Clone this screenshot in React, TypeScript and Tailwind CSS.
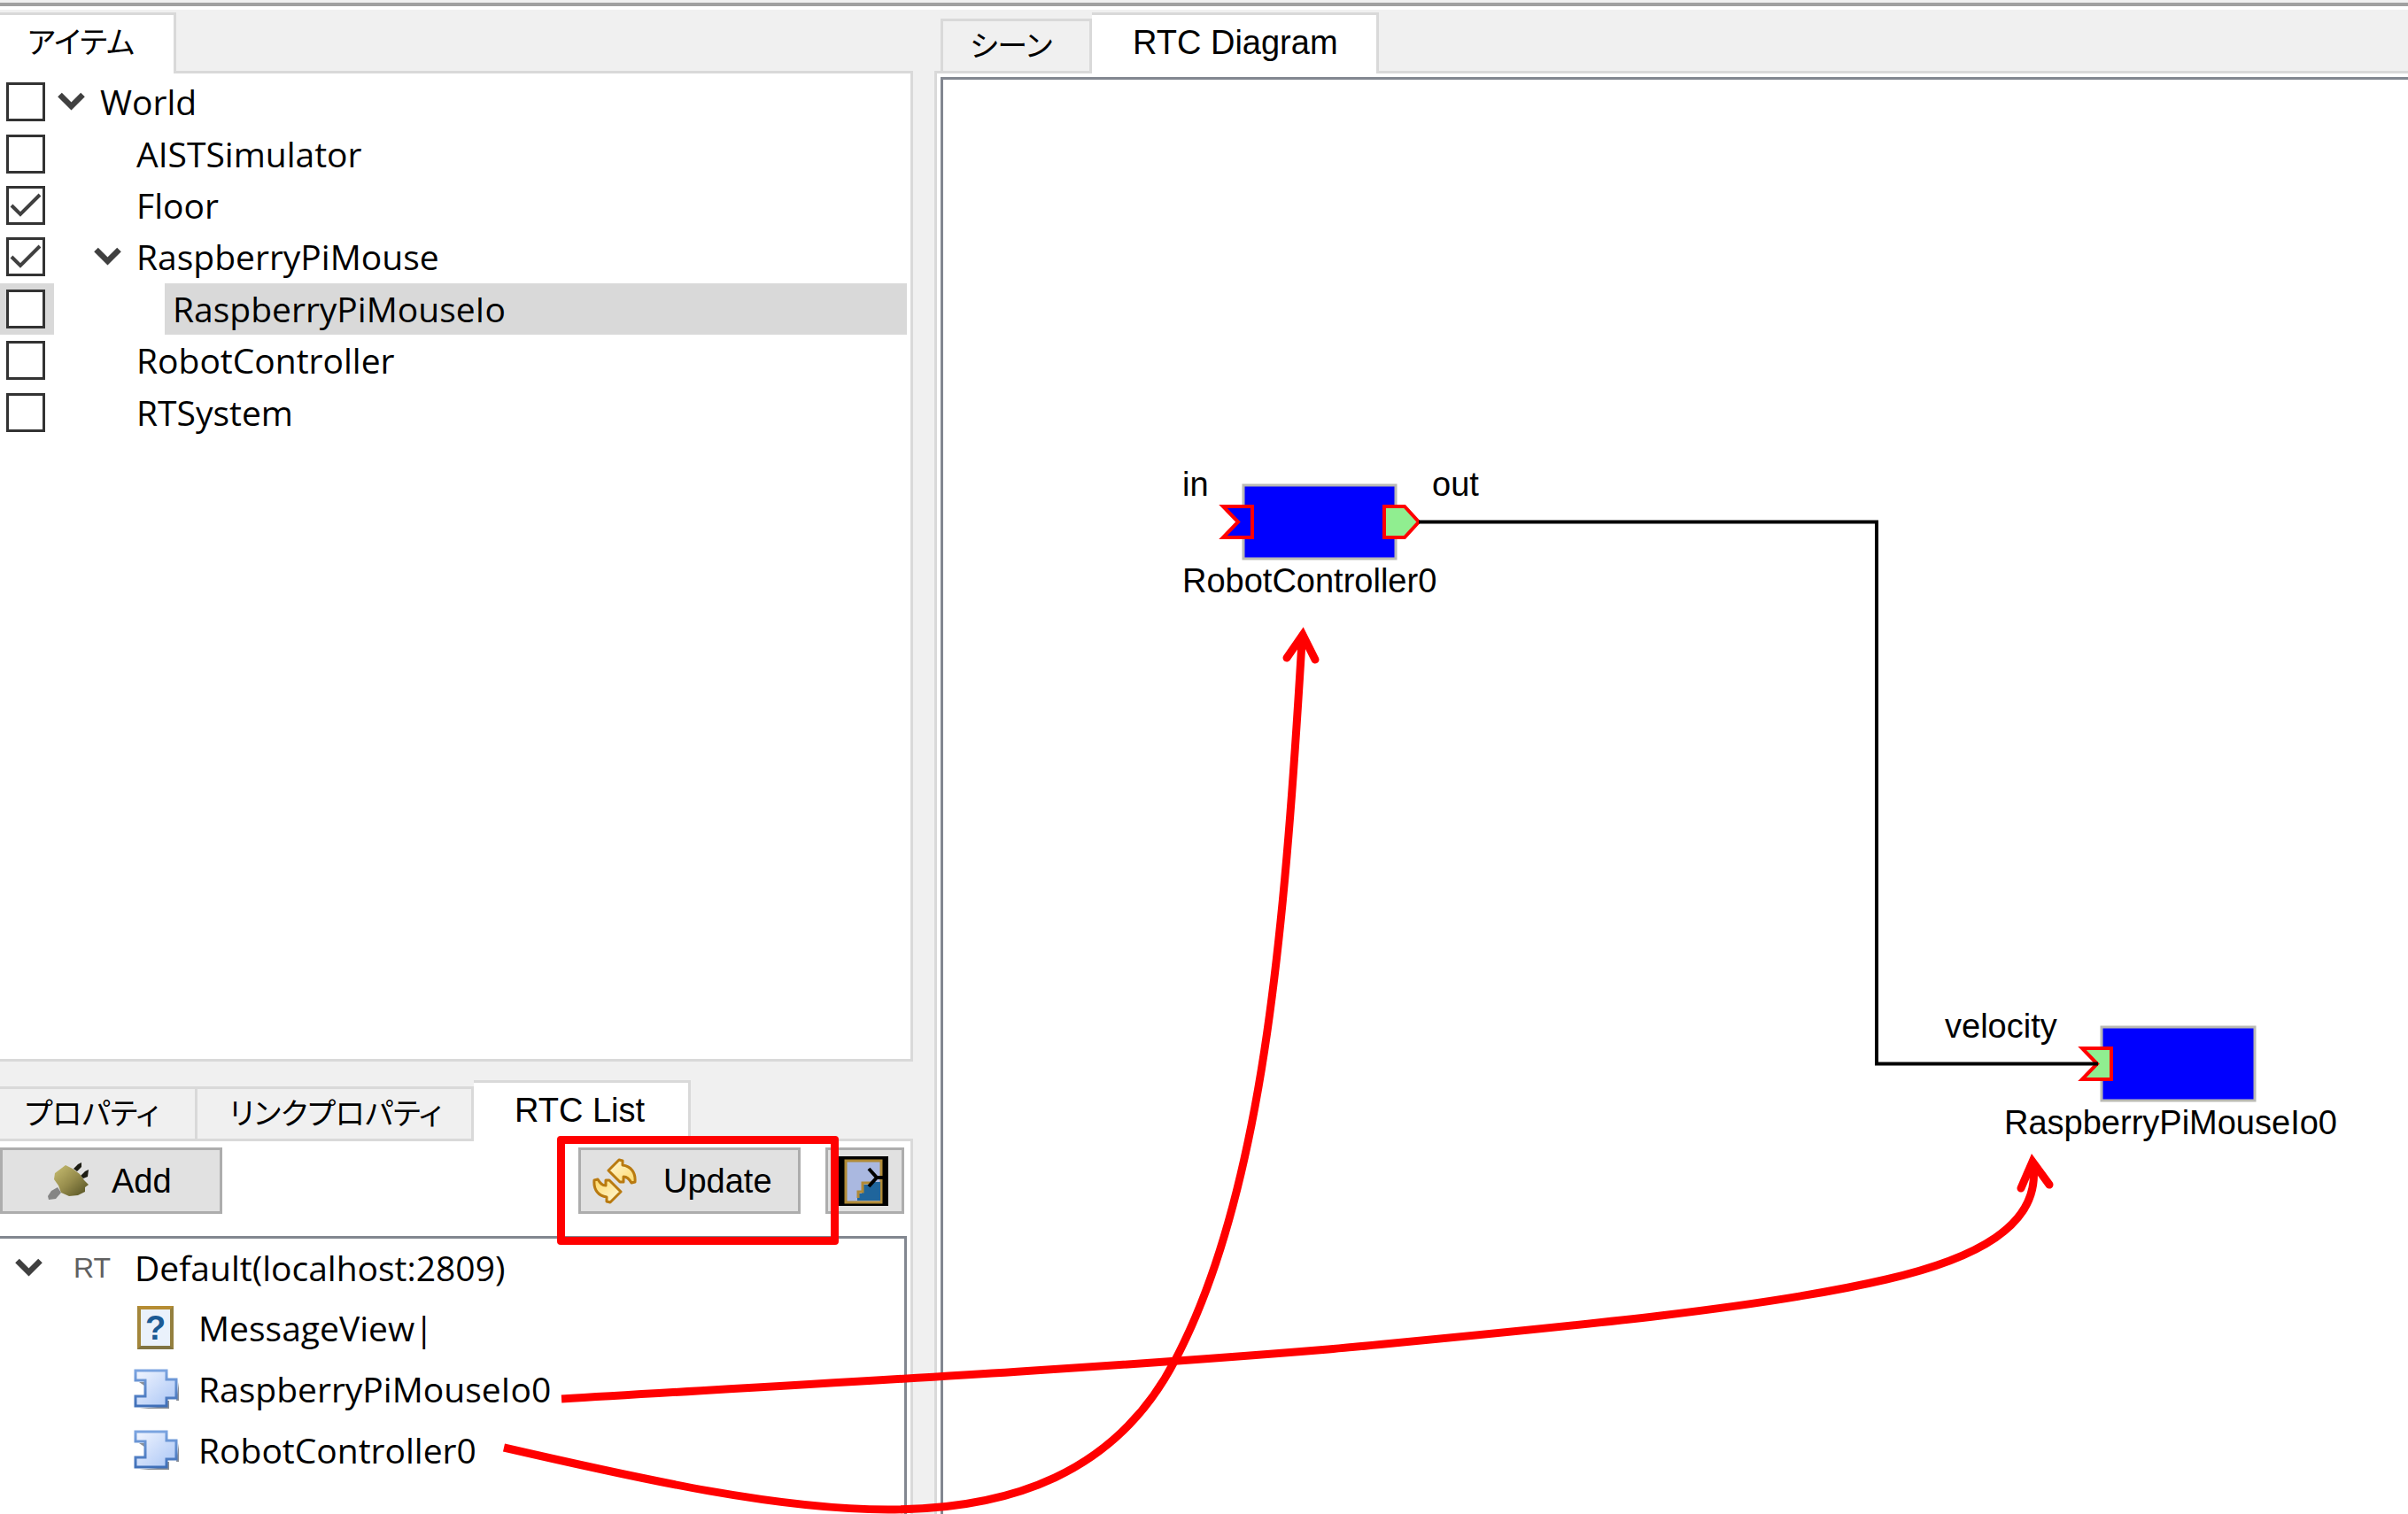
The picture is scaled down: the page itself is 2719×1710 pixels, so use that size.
import React from "react";

type Item = { id: string; name: string; level: 0 | 1 | 2; checked?: boolean; open?: boolean; selected?: boolean };

const items: Item[] = [
  { id: "world", name: "World", level: 0, open: true },
  { id: "aist", name: "AISTSimulator", level: 1 },
  { id: "floor", name: "Floor", level: 1, checked: true },
  { id: "mouse", name: "RaspberryPiMouse", level: 1, checked: true, open: true },
  { id: "mouse-io", name: "RaspberryPiMouseIo", level: 2, selected: true },
  { id: "controller", name: "RobotController", level: 1 },
  { id: "rtsystem", name: "RTSystem", level: 1 },
];

const indent = { 0: "w-[43px]", 1: "w-[84px]", 2: "w-[125px]" };

function Chevron() {
  return (
    <svg className="h-[22px] w-[31px]" viewBox="0 0 31 22" fill="none" aria-hidden="true">
      <path d="M2.500 3 L15.500 16 L28.500 3" stroke="#404040" strokeWidth="6.500" />
    </svg>
  );
}

function TreeRow({ item }: { item: Item }) {
  return (
    <li className="flex items-stretch">
      <span className={`flex w-[61px] items-center pl-[7px] ${item.selected ? "bg-[#d9d9d9]" : ""}`}>
        <span className="relative flex">
          <input
            id={item.id}
            type="checkbox"
            defaultChecked={item.checked}
            className="peer size-11 appearance-none border-3 border-[#333333] bg-white"
          />
          <svg
            className="pointer-events-none absolute inset-0 hidden size-11 peer-checked:block"
            viewBox="0 0 44 44"
            fill="none"
            aria-hidden="true"
          >
            <path d="M6 22 L16 32 L38 10" stroke="#404040" strokeWidth="4" />
          </svg>
        </span>
      </span>
      <span className={`flex items-center justify-end pr-2 ${indent[item.level]}`}>
        {item.open && (
          <button type="button" aria-label={`Collapse ${item.name}`}>
            <Chevron />
          </button>
        )}
      </span>
      <label
        htmlFor={item.id}
        className={`mr-1 flex flex-1 items-center pl-[9px] ${item.selected ? "bg-[#d9d9d9]" : ""}`}
      >
        {item.name}
      </label>
    </li>
  );
}

function Tab({ children, active, className = "" }: { children: React.ReactNode; active?: boolean; className?: string }) {
  return (
    <button
      type="button"
      role="tab"
      aria-selected={!!active}
      className={`relative flex items-center whitespace-nowrap border-t-3 border-r-3 border-[#d9d9d9] ${
        active ? "-mb-[3px] h-[69px] bg-white pb-1" : "h-[59px] bg-[#f0f0f0]"
      } ${className}`}
    >
      {children}
    </button>
  );
}

function PlugIcon() {
  return (
    <svg className="h-[42px] w-[46px]" viewBox="0 0 46 42" aria-hidden="true">
      <defs>
        <linearGradient id="plug" x1="0" y1="0" x2="1" y2="1">
          <stop offset="0" stopColor="#c9bf72" />
          <stop offset="0.500" stopColor="#968c4c" />
          <stop offset="1" stopColor="#4f4d20" />
        </linearGradient>
      </defs>
      <path d="M11 28 L4 32 L0 38 L1 42 L9 41 L15 34 Z" fill="#858585" />
      <path d="M29 7 L34 2 L38 0 L38 5 L33 10 Z M37 15 L42 10 L46 8 L45 16 L40 18 Z" fill="#1d1d14" />
      <path d="M20 3 L28 7 L36 13 L41 20 L46 25 L42 28 L42 33 L34 37 L24 38 L15 34 L12 26 L7 19 L8 12 Z" fill="url(#plug)" />
    </svg>
  );
}

function RefreshIcon() {
  const arrow = "M18 14 L30 2 L34 3 L34 8 C43 9 49 16 48 27 L44 28 C41 23 39 21 35 21 L35 27 L31 27 Z";
  return (
    <svg className="h-[52px] w-[50px]" viewBox="0 0 50 52" aria-hidden="true">
      <defs>
        <linearGradient id="gold" x1="0" y1="0" x2="1" y2="1">
          <stop offset="0" stopColor="#fff9dc" />
          <stop offset="1" stopColor="#ffd968" />
        </linearGradient>
      </defs>
      <g fill="url(#gold)" stroke="#b97a10" strokeWidth="3" strokeLinejoin="round">
        <path d={arrow} />
        <path d={arrow} transform="rotate(180 25 26)" />
      </g>
    </svg>
  );
}

function PanelIcon() {
  return (
    <svg className="size-14" viewBox="0 0 56 56" aria-hidden="true">
      <rect width="56" height="56" fill="#000000" />
      <rect x="8" y="5" width="40" height="47" fill="#aab8e0" stroke="#b08a36" strokeWidth="3" />
      <path d="M47 29 H36 V32 H26 V42 H21 V50 H47 Z" fill="#1f659c" />
      <path d="M37 30 H27 V40 H22 V47" fill="none" stroke="#b08a36" strokeWidth="3" />
      <path d="M34 14 L43 24 L34 34 M42 24 H56" fill="none" stroke="#000000" strokeWidth="4" />
    </svg>
  );
}

function ComponentIcon() {
  return (
    <svg className="h-[46px] w-[52px]" viewBox="0 0 52 46" aria-hidden="true">
      <defs>
        <linearGradient id="comp" x1="0" y1="0" x2="1" y2="1">
          <stop offset="0" stopColor="#f1f5ff" />
          <stop offset="1" stopColor="#a9c5f5" />
        </linearGradient>
        <linearGradient id="edge" x1="0" y1="0" x2="0" y2="1">
          <stop offset="0" stopColor="#7ba4e0" />
          <stop offset="1" stopColor="#3f6fb8" />
        </linearGradient>
      </defs>
      <path d="M6 45 H40 V36 H51 V15 L48 36 H38 V42 Z M6 15 H12 V19 Z" fill="#8b8f96" />
      <path d="M2 2 H37 V12 H48 V33 H37 V42 H2 V31 H13 V13 H2 Z" fill="url(#comp)" stroke="url(#edge)" strokeWidth="3" />
    </svg>
  );
}

function QuestionIcon() {
  return (
    <span
      aria-hidden="true"
      className="ml-1 flex h-[49px] w-[41px] items-center justify-center border-4 border-t-[#b68d33] border-r-[#94803f] border-b-[#807342] border-l-[#a3863a] bg-[#eaf1fb] font-['Liberation_Sans'] text-[38px] leading-none font-bold text-[#1b5a94]"
    >
      ?
    </span>
  );
}

const components = [
  { name: "MessageView|", icon: <QuestionIcon /> },
  { name: "RaspberryPiMouseIo0", icon: <ComponentIcon /> },
  { name: "RobotController0", icon: <ComponentIcon /> },
];

const toolButton = "flex h-[75px] items-center border-3 border-[#adadad] bg-[#e1e1e1]";

function Diagram() {
  const label = "absolute leading-[44px] whitespace-nowrap";
  return (
    <div className="relative flex-1 overflow-hidden border-t-3 border-l-3 border-[#828790] bg-white">
      <svg className="absolute inset-0 size-full" aria-hidden="true">
        <g stroke="#b9b9b4" strokeWidth="3" fill="#0000ff">
          <rect x="339" y="458" width="172" height="83" />
          <rect x="1308" y="1070" width="173" height="83" />
        </g>
        <g stroke="#ff0000" strokeWidth="4">
          <path d="M316 482 H349 V517 H316 L333 499.500 Z" fill="#0000ff" />
          <path d="M498 482 H521 L537 499.500 L521 517 H498 Z" fill="#90ee90" />
          <path d="M1286 1094 H1319 V1129 H1286 L1303 1111.500 Z" fill="#90ee90" />
        </g>
        <path d="M537 499.500 H1054 V1111.500 H1304" fill="none" stroke="#000000" strokeWidth="4" />
      </svg>
      <span className={`${label} top-[435px] left-[270px]`}>in</span>
      <span className={`${label} top-[435px] left-[552px]`}>out</span>
      <span className={`${label} top-[544px] left-[270px]`}>RobotController0</span>
      <span className={`${label} top-[1047px] left-[1131px]`}>velocity</span>
      <span className={`${label} top-[1156px] left-[1198px]`}>RaspberryPiMouseIo0</span>
    </div>
  );
}

function Annotations() {
  return (
    <svg className="pointer-events-none absolute inset-0 size-full" aria-hidden="true">
      <g fill="none" stroke="#ff0000" strokeWidth="9">
        <path d="M634 1580 C920 1563 1220 1547 1500 1524 C1740 1501 1980 1480 2130 1445 C2230 1422 2303 1385 2296 1318" />
        <path d="M569 1635 C730 1672 880 1705 1003 1705 C1140 1705 1260 1665 1327 1536 C1425 1350 1450 1060 1470 725" />
        <g strokeLinecap="round">
          <path d="M2282 1342 L2295 1312 L2314 1338" />
          <path d="M1453 743 L1471 717 L1485 745" />
        </g>
      </g>
    </svg>
  );
}

export default function App() {
  return (
    <div className="relative flex h-screen flex-col overflow-hidden bg-[#f0f0f0] font-['Liberation_Sans','Noto_Sans_CJK_JP',sans-serif] text-[38px] leading-[44px] text-black">
      <div className="mt-[3px] h-2 shrink-0 border-t-4 border-[#a0a0a0] bg-white" />
      <div className="grid min-h-0 flex-1 grid-cols-[1031px_minmax(0,1fr)] gap-6">
        <div className="flex min-h-0 flex-col">
          <div role="tablist" className="flex h-[69px] shrink-0 items-end">
            <Tab active className="w-[199px] pl-[31px]">
              <span className="text-[34px] [font-feature-settings:'palt']">アイテム</span>
            </Tab>
          </div>
          <section className="min-h-0 flex-1 border-3 border-l-0 border-[#d9d9d9] bg-white pt-[3px] font-['Open_Sans',sans-serif] text-[39px]">
            <ul className="grid h-[409px] grid-rows-7">
              {items.map((item) => (
                <TreeRow key={item.id} item={item} />
              ))}
            </ul>
          </section>

          <div role="tablist" className="flex h-[87px] shrink-0 items-end">
            <Tab className="w-[223px] pl-7">
              <span className="text-[34px] [font-feature-settings:'palt']">プロパティ</span>
            </Tab>
            <Tab className="w-[312px] pl-9">
              <span className="text-[34px] [font-feature-settings:'palt']">リンクプロパティ</span>
            </Tab>
            <Tab active className="w-[245px] pl-[46px]">
              RTC List
            </Tab>
          </div>
          <section className="flex h-[424px] shrink-0 flex-col border-t-3 border-r-3 border-[#d9d9d9] bg-white pt-[7px]">
            <div className="flex pr-[7px]">
              <button type="button" className={`${toolButton} w-[251px] gap-[26px] pl-[51px]`}>
                <PlugIcon />
                Add
              </button>
              <div className="relative z-10 mr-7 ml-auto">
                <button type="button" className={`${toolButton} w-[251px] gap-[30px] pl-[13px]`}>
                  <RefreshIcon />
                  Update
                </button>
                <div className="pointer-events-none absolute -top-[13px] -left-6 h-[123px] w-[318px] rounded-sm border-9 border-[#ff0000]" />
              </div>
              <button type="button" aria-label="Toggle panel" className={`${toolButton} w-[89px] pl-3`}>
                <PanelIcon />
              </button>
            </div>
            <div className="mt-[25px] mr-1 flex-1 border-t-3 border-r-3 border-[#828790] font-['Open_Sans',sans-serif] text-[39px]">
              <div className="flex h-[66px] items-center">
                <button type="button" aria-label="Collapse Default" className="ml-[17px]">
                  <Chevron />
                </button>
                <span className="ml-[35px] w-[69px] font-['Liberation_Sans'] text-[32px] text-[#606060]" aria-hidden="true">
                  RT
                </span>
                <span>Default(localhost:2809)</span>
              </div>
              <ul>
                {components.map((c) => (
                  <li key={c.name} className="flex h-[69px] items-center">
                    <span className="ml-[150px] flex w-[74px] pl-px">{c.icon}</span>
                    {c.name}
                  </li>
                ))}
              </ul>
            </div>
          </section>
        </div>

        <div className="flex min-h-0 flex-col">
          <div role="tablist" className="flex h-[69px] shrink-0 items-end pl-[7px]">
            <Tab className="w-[171px] border-l-3 pl-[30px]">
              <span className="text-[34px] [font-feature-settings:'palt']">シーン</span>
            </Tab>
            <Tab active className="w-[324px] pl-[46px]">
              RTC Diagram
            </Tab>
          </div>
          <section className="flex min-h-0 flex-1 border-t-3 border-l-3 border-[#d9d9d9] bg-white pt-1 pl-1">
            <Diagram />
          </section>
        </div>
      </div>
      <Annotations />
    </div>
  );
}
